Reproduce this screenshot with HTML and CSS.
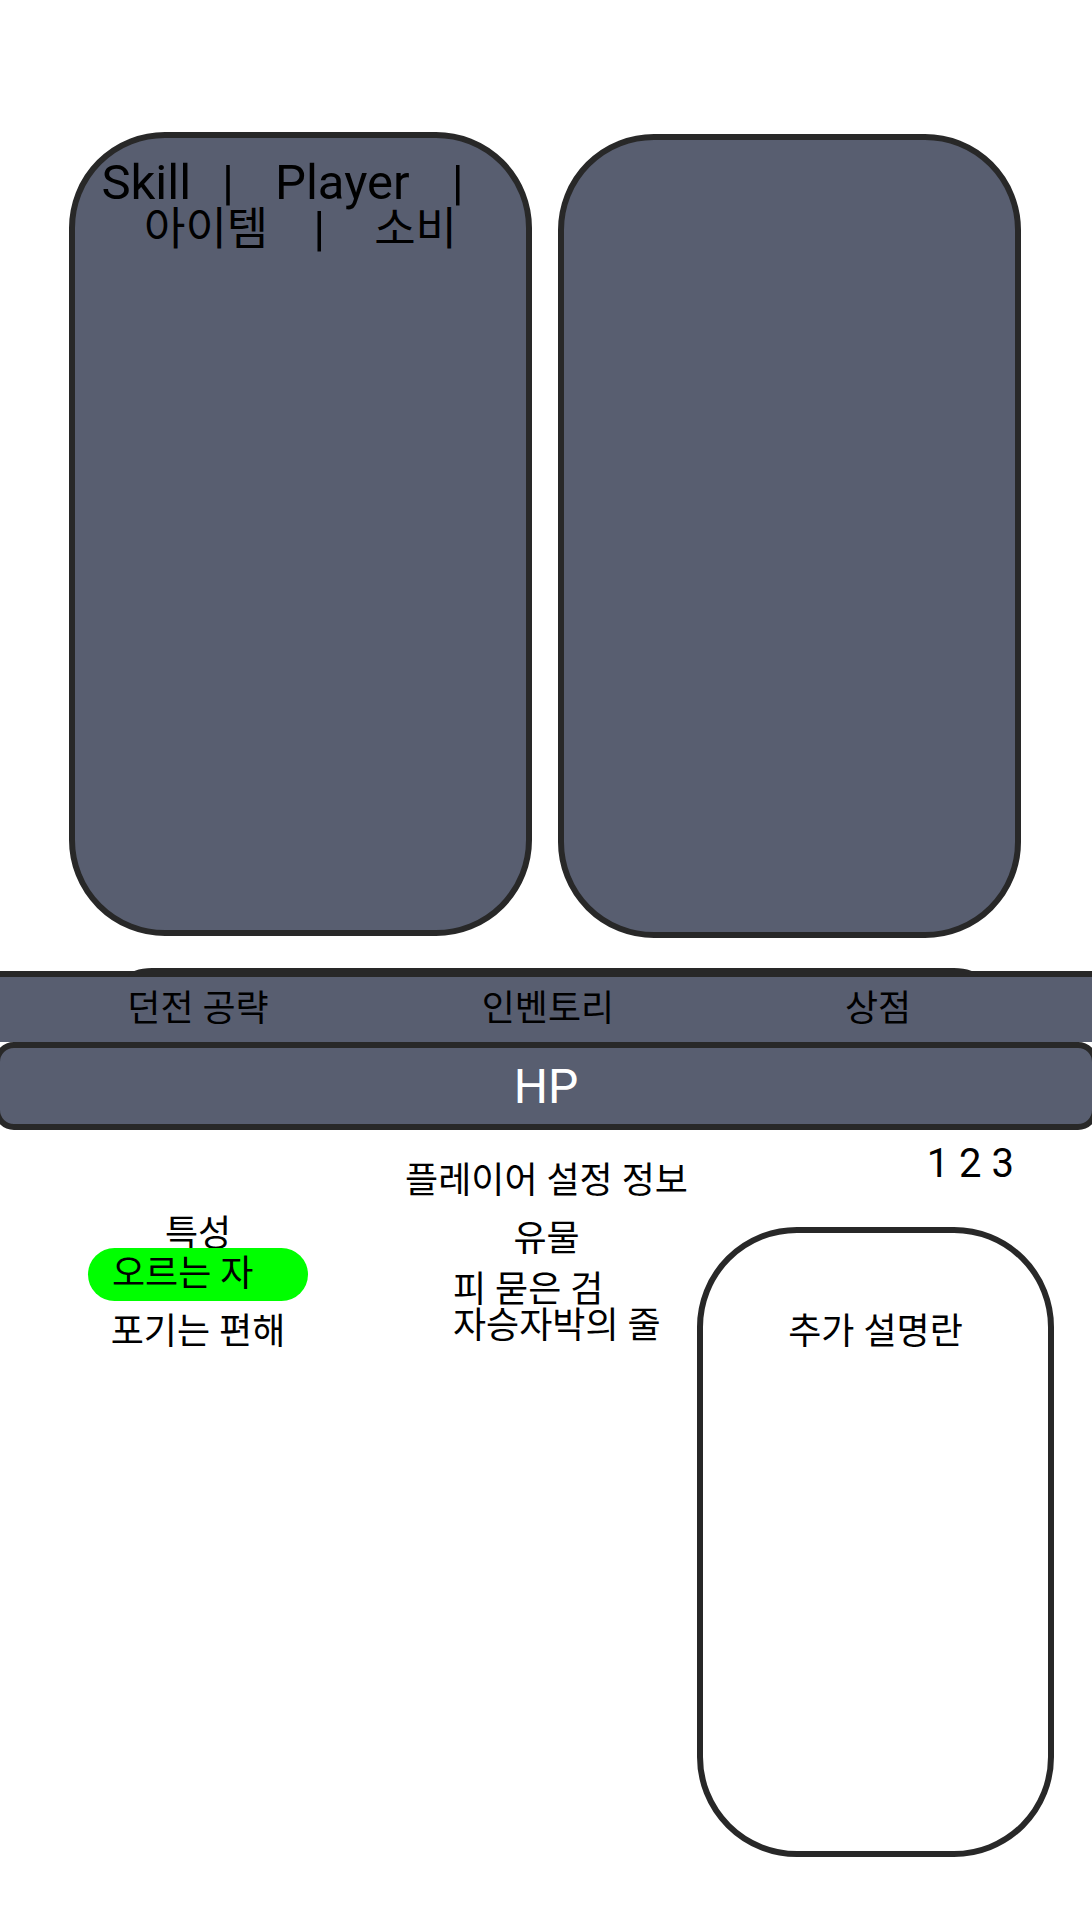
FILE: index.html
```html
<!DOCTYPE html>
<html lang="ko">
<head>
<meta charset="utf-8">
<title>Player</title>
<link rel="stylesheet" href="styles.css">
</head>
<body>
<div class="page">
  <div class="cards">
    <div class="card">
      <div class="tabs">
        <div class="tab-line">Skill<span class="bar bar-a">|</span>Player<span class="bar bar-b">|</span></div>
        <div class="tab-line"><span class="ko">아이템</span><span class="bar bar-c">|</span><span class="ko">소비</span></div>
      </div>
    </div>
    <div class="card card-right"></div>
  </div>

  <nav class="nav">
    <div class="nav-item">던전 공략</div>
    <div class="nav-item">인벤토리</div>
    <div class="nav-item">상점</div>
  </nav>

  <div class="hp">HP</div>

  <div class="lower">
    <div class="col col1">
      <div class="label">특성</div>
      <div class="pill">오르는 자</div>
      <div class="label label-last">포기는 편해</div>
    </div>
    <div class="col col2">
      <div class="title">플레이어 설정 정보</div>
      <div class="title relic-head">유물</div>
      <div class="relics">
        <div>피 묻은 검</div>
        <div>자승자박의 줄</div>
      </div>
    </div>
    <div class="col col3">
      <div class="pages">1 2 3</div>
      <div class="desc">추가 설명란</div>
    </div>
  </div>
</div>
</body>
</html>
```

FILE: styles.css
```css
body {
  margin: 0;
  background: #ffffff;
  font-family: Roboto, "Noto Sans CJK KR", sans-serif;
  color: #000000;
}

.page {
  width: 1092px;
  height: 1932px;
  overflow: hidden;
}

/* top cards */
.cards {
  display: flex;
  align-items: flex-start;
  gap: 26px;
  padding: 132px 0 0 69px;
}

.card {
  box-sizing: border-box;
  width: 463px;
  height: 804px;
  background: #585e70;
  border: 6px solid #282828;
  border-radius: 96px;
}

.card-right {
  margin-top: 2px;
}

.tabs {
  padding-top: 22px;
  text-align: center;
  font-size: 49px;
  line-height: 46px;
  white-space: nowrap;
}

.ko {
  font-size: 45px;
}

.bar-a {
  margin: 0 41px 0 31px;
}

.bar-b {
  margin: 0 36px 0 42px;
}

.bar-c {
  margin: 0 49px 0 45px;
}

/* nav */
.nav {
  position: relative;
  margin-top: 33px;
  height: 65px;
  background: #585e70;
  border-top: 6px solid #282828;
  display: grid;
  grid-template-columns: 396px 304px 356px;
  align-items: center;
}

.nav::before {
  content: "";
  position: absolute;
  left: 128px;
  width: 850px;
  top: -9px;
  height: 9px;
  background: #282828;
  border-radius: 24px 24px 0 0 / 9px 9px 0 0;
}

.nav-item {
  text-align: center;
  font-size: 36px;
  line-height: 65px;
}

/* HP bar */
.hp {
  margin: 0 -6px;
  height: 76px;
  background: #585e70;
  border: 6px solid #282828;
  border-radius: 20px;
  display: flex;
  align-items: center;
  justify-content: center;
  color: #ffffff;
  font-size: 48px;
}

/* lower section */
.lower {
  display: flex;
}

.col {
  display: flex;
  flex-direction: column;
}

.col1 {
  width: 396px;
  align-items: center;
  padding-top: 88px;
}

.label {
  font-size: 36px;
  line-height: 32px;
}

.label-last {
  margin-top: 15px;
}

.pill {
  box-sizing: border-box;
  width: 220px;
  height: 53px;
  margin-top: -2px;
  border-radius: 27px;
  background: #00ff00;
  padding-left: 24px;
  font-size: 36px;
  line-height: 53px;
}

.col2 {
  width: 301px;
  align-items: center;
  padding-top: 31px;
}

.title {
  font-size: 36px;
  line-height: 40px;
}

.relic-head {
  margin-top: 18px;
}

.relics {
  align-self: flex-start;
  margin-left: 57px;
  margin-top: 13px;
  font-size: 36px;
  line-height: 36px;
}

.col3 {
  width: 357px;
  padding-top: 14px;
}

.pages {
  align-self: flex-end;
  margin-right: 40px;
  font-size: 40px;
  line-height: 40px;
}

.desc {
  box-sizing: border-box;
  margin-top: 43px;
  height: 630px;
  border: 6px solid #282828;
  border-radius: 100px;
  padding-top: 79px;
  text-align: center;
  font-size: 36px;
  line-height: 40px;
}
```
